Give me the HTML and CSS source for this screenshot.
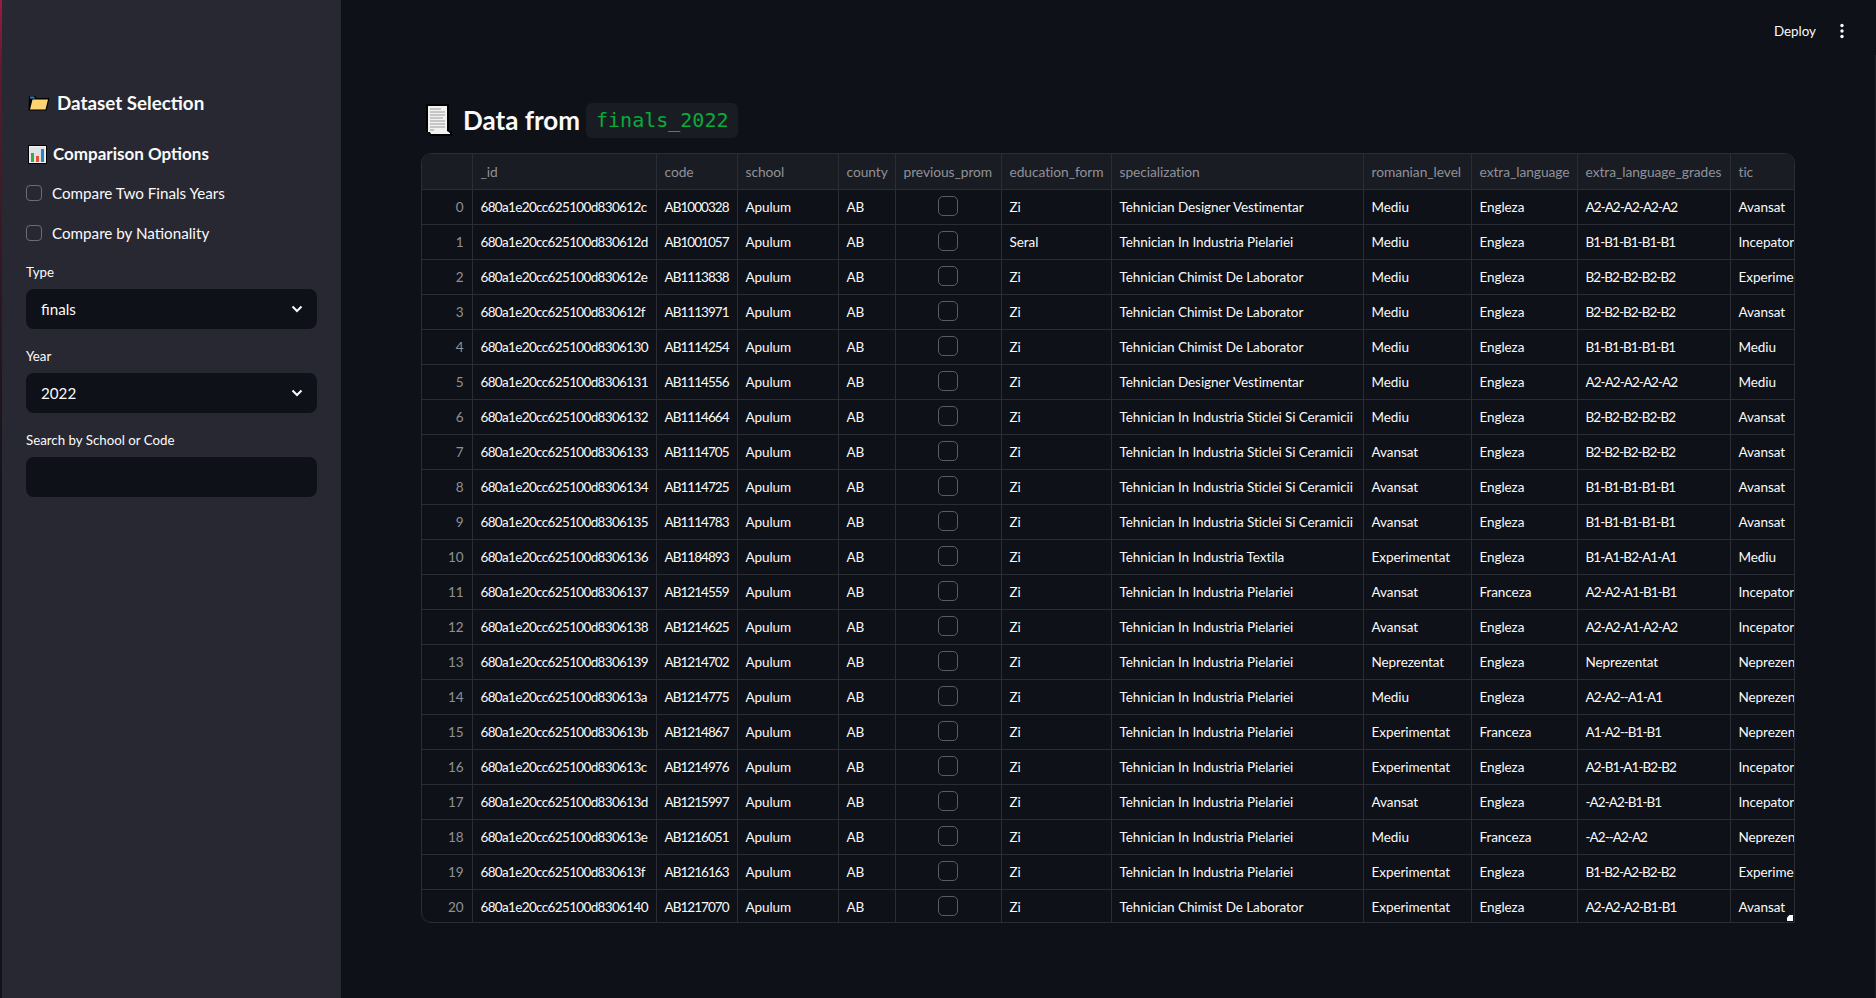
FILE: index.html
```html
<!DOCTYPE html>
<html lang="en">
<head>
    <meta charset="UTF-8">
    <title>Data from finals_2022</title>
    <link rel="stylesheet" href="styles.css">
</head>
<body>

<aside class="sidebar">
    <h2 class="side-title">
        <svg class="emoji-folder" viewBox="0 0 22 16"><path d="M1 1h6l1.500 2H21.500L18.500 15.500H0.500z" fill="#000"/><path d="M2 1.500h4l1 2h-5z" fill="#2a7fc4"/><path d="M4.500 4.500H20L17.500 14.500H2z" fill="#fcd272"/></svg>
        Dataset Selection
    </h2>
    <h3 class="side-subtitle">
        <svg class="emoji-chart" viewBox="0 0 19 19"><rect x="0.500" y="0.500" width="18" height="18" fill="#f2f2f2" stroke="#000"/><rect x="2" y="2" width="15" height="15" fill="#dfe3e6"/><rect x="3" y="8" width="3" height="9" fill="#3aa845"/><rect x="8" y="11" width="3" height="6" fill="#e8502f"/><rect x="13" y="4" width="3" height="13" fill="#2f80c8"/></svg>
        Comparison Options
    </h3>

    <label class="check"><span class="box"></span>Compare Two Finals Years</label>
    <label class="check"><span class="box"></span>Compare by Nationality</label>

    <div class="field">
        <div class="field-label">Type</div>
        <div class="select">finals<svg class="chevron" viewBox="0 0 12 8"><path d="M1.500 1.500 6 6l4.500-4.500" fill="none" stroke="#fafafa" stroke-width="2"/></svg></div>
    </div>
    <div class="field">
        <div class="field-label">Year</div>
        <div class="select">2022<svg class="chevron" viewBox="0 0 12 8"><path d="M1.500 1.500 6 6l4.500-4.500" fill="none" stroke="#fafafa" stroke-width="2"/></svg></div>
    </div>
    <div class="field">
        <div class="field-label">Search by School or Code</div>
        <div class="select"></div>
    </div>
</aside>

<main class="main">
    <div class="topbar">
        <span class="deploy">Deploy</span>
        <svg class="menu-dots" viewBox="0 0 4 16"><circle cx="2" cy="2.500" r="1.700"/><circle cx="2" cy="8" r="1.700"/><circle cx="2" cy="13.500" r="1.700"/></svg>
    </div>

    <h1 class="title">
        <svg class="emoji-doc" viewBox="0 0 27 32"><path d="M1 0h23v27h3v5H5l-1-4H1z" fill="#000"/><path d="M3 2h19v25l3 2v1H6l-1-2H3z" fill="#f1f1f1"/><path d="M5 5h11M5 8h15M5 11h15M5 14h13M5 17h15M5 20h15M5 23h15M5 26h4" stroke="#9a9a9a" stroke-width="1"/></svg>
        <span>Data from</span>
        <code class="chip">finals_2022</code>
    </h1>

    <div class="grid-wrap">
        <table class="grid">
            <colgroup>
                <col class="c-index"><col class="c-id"><col class="c-code"><col class="c-school"><col class="c-county">
                <col class="c-prom"><col class="c-form"><col class="c-spec"><col class="c-level"><col class="c-lang">
                <col class="c-grades"><col class="c-tic">
            </colgroup>
            <thead>
                <tr>
                    <th></th><th>_id</th><th>code</th><th>school</th><th>county</th><th>previous_prom</th><th>education_form</th>
                    <th>specialization</th><th>romanian_level</th><th>extra_language</th><th>extra_language_grades</th><th>tic</th>
                </tr>
            </thead>
            <tbody id="rows"></tbody>
        </table>
        <span class="resize-handle"></span>
    </div>
</main>

<script>
    const pie = 'Tehnician In Industria Pielariei';
    const des = 'Tehnician Designer Vestimentar';
    const chi = 'Tehnician Chimist De Laborator';
    const sti = 'Tehnician In Industria Sticlei Si Ceramicii';

    // code, form, specialization, level, language, grades, tic
    const data = [
        ['AB1000328', 'Zi', des, 'Mediu', 'Engleza', 'A2-A2-A2-A2-A2', 'Avansat'],
        ['AB1001057', 'Seral', pie, 'Mediu', 'Engleza', 'B1-B1-B1-B1-B1', 'Incepator'],
        ['AB1113838', 'Zi', chi, 'Mediu', 'Engleza', 'B2-B2-B2-B2-B2', 'Experimentat'],
        ['AB1113971', 'Zi', chi, 'Mediu', 'Engleza', 'B2-B2-B2-B2-B2', 'Avansat'],
        ['AB1114254', 'Zi', chi, 'Mediu', 'Engleza', 'B1-B1-B1-B1-B1', 'Mediu'],
        ['AB1114556', 'Zi', des, 'Mediu', 'Engleza', 'A2-A2-A2-A2-A2', 'Mediu'],
        ['AB1114664', 'Zi', sti, 'Mediu', 'Engleza', 'B2-B2-B2-B2-B2', 'Avansat'],
        ['AB1114705', 'Zi', sti, 'Avansat', 'Engleza', 'B2-B2-B2-B2-B2', 'Avansat'],
        ['AB1114725', 'Zi', sti, 'Avansat', 'Engleza', 'B1-B1-B1-B1-B1', 'Avansat'],
        ['AB1114783', 'Zi', sti, 'Avansat', 'Engleza', 'B1-B1-B1-B1-B1', 'Avansat'],
        ['AB1184893', 'Zi', 'Tehnician In Industria Textila', 'Experimentat', 'Engleza', 'B1-A1-B2-A1-A1', 'Mediu'],
        ['AB1214559', 'Zi', pie, 'Avansat', 'Franceza', 'A2-A2-A1-B1-B1', 'Incepator'],
        ['AB1214625', 'Zi', pie, 'Avansat', 'Engleza', 'A2-A2-A1-A2-A2', 'Incepator'],
        ['AB1214702', 'Zi', pie, 'Neprezentat', 'Engleza', 'Neprezentat', 'Neprezentat'],
        ['AB1214775', 'Zi', pie, 'Mediu', 'Engleza', 'A2-A2--A1-A1', 'Neprezentat'],
        ['AB1214867', 'Zi', pie, 'Experimentat', 'Franceza', 'A1-A2--B1-B1', 'Neprezentat'],
        ['AB1214976', 'Zi', pie, 'Experimentat', 'Engleza', 'A2-B1-A1-B2-B2', 'Incepator'],
        ['AB1215997', 'Zi', pie, 'Avansat', 'Engleza', '-A2-A2-B1-B1', 'Incepator'],
        ['AB1216051', 'Zi', pie, 'Mediu', 'Franceza', '-A2--A2-A2', 'Neprezentat'],
        ['AB1216163', 'Zi', pie, 'Experimentat', 'Engleza', 'B1-B2-A2-B2-B2', 'Experimentat'],
        ['AB1217070', 'Zi', chi, 'Experimentat', 'Engleza', 'A2-A2-A2-B1-B1', 'Avansat']
    ];

    let html = '';
    data.forEach((row, i) => {
        const id = '680a1e20cc625100d830' + (0x612c + i).toString(16);
        html += '<tr><td class="index">' + i + '</td><td class="tight">' + id + '</td><td class="code">' + row[0] + '</td><td>Apulum</td><td>AB</td>'
            + '<td class="prom"><span class="cell-box"></span></td>'
            + row.slice(1).map(v => (v.includes('-') ? '<td class="code">' : '<td>') + v + '</td>').join('') + '</tr>';
    });
    document.getElementById('rows').innerHTML = html;
</script>

</body>
</html>
```

FILE: styles.css
```css
* {
    box-sizing: border-box;
}

body {
    position: relative;
    font-family: Lato, "Noto Sans", sans-serif;
    background-color: #0e1117;
    color: #fafafa;
    display: flex;
    height: 100vh;
    margin: 0;
    overflow: hidden;
}

/* thin scrollbar track on the right edge */
body::after {
    content: "";
    position: absolute;
    top: 55px;
    right: 0;
    bottom: 0;
    width: 1px;
    background-color: #1e2027;
}

/* sidebar */
.sidebar {
    width: 341px;
    flex-shrink: 0;
    height: 100%;
    background-color: #282832;
    border-left: 2px solid;
    border-image: linear-gradient(to bottom, #a01a42 0, #5c1a30 70px, #2a1820 300px, #121218 500px) 1;
    padding: 91px 24px 0 24px;
}

.side-title {
    display: flex;
    align-items: center;
    gap: 7px;
    margin: 0 0 27px 2px;
    font-size: 18.8px;
    line-height: 24px;
    font-weight: 700;
}

.side-subtitle {
    display: flex;
    align-items: center;
    gap: 6px;
    margin: 0 0 15px 2px;
    font-size: 17px;
    line-height: 24px;
    font-weight: 700;
}

.emoji-folder {
    width: 22px;
    height: 16px;
}

.emoji-chart {
    width: 19px;
    height: 19px;
}

.check {
    display: flex;
    align-items: center;
    gap: 10px;
    height: 24px;
    margin-bottom: 16px;
    font-size: 15.2px;
}

.check:last-of-type {
    margin-bottom: 17px;
}

.box {
    width: 16px;
    height: 16px;
    border: 1px solid #6b6d75;
    border-radius: 4px;
}

.field {
    margin-bottom: 17px;
}

.field-label {
    font-size: 13.3px;
    line-height: 20px;
    margin-bottom: 7px;
}

.select {
    display: flex;
    align-items: center;
    justify-content: space-between;
    height: 40px;
    padding: 0 14px 0 15px;
    background-color: #0e1117;
    border-radius: 8px;
    font-size: 15.2px;
}

.chevron {
    width: 12px;
    height: 8px;
}

/* main area */
.main {
    flex: 1;
    min-width: 0;
    padding: 0 82px 0 80px;
}

.topbar {
    display: flex;
    justify-content: flex-end;
    align-items: center;
    gap: 24px;
    height: 62px;
    margin-right: -50px;
}

.deploy {
    font-size: 13.4px;
}

.menu-dots {
    width: 4px;
    height: 16px;
    fill: #fafafa;
}

.title {
    display: flex;
    align-items: center;
    height: 44px;
    margin: 36px 0 11px 4px;
    font-size: 26px;
    font-weight: 700;
}

.emoji-doc {
    width: 27px;
    height: 32px;
    margin-right: 11px;
}

.chip {
    display: block;
    margin-left: 6px;
    padding: 5px 10px;
    background-color: #1a1c24;
    border-radius: 6px;
    font-family: "DejaVu Sans Mono", monospace;
    font-size: 20px;
    line-height: 25px;
    font-weight: 400;
    color: #09ab3b;
}

/* dataframe */
.grid-wrap {
    position: relative;
    width: 1374px;
    height: 770px;
    border: 1px solid #2b2d35;
    border-radius: 10px 10px 0 10px;
    overflow: hidden;
}

.grid {
    table-layout: fixed;
    border-collapse: collapse;
    width: 1372px;
    font-size: 13.5px;
    letter-spacing: -0.07px;
}

.c-index { width: 50px; }
.c-id { width: 184px; }
.c-code { width: 81px; }
.c-school { width: 101px; }
.c-county { width: 57px; }
.c-prom { width: 106px; }
.c-form { width: 110px; }
.c-spec { width: 252px; }
.c-level { width: 108px; }
.c-lang { width: 106px; }
.c-grades { width: 153px; }
.c-tic { width: 64px; }

.grid th,
.grid td {
    padding: 0 0 0 8px;
    border-right: 1px solid #2b2d35;
    border-bottom: 1px solid #2b2d35;
    white-space: nowrap;
    overflow: hidden;
    text-align: left;
}

.grid th:last-child,
.grid td:last-child {
    border-right: none;
}

.grid th {
    height: 35px;
    background-color: #1a1c24;
    font-size: 13.8px;
    font-weight: 400;
    color: #8f9198;
}

.grid td {
    height: 35px;
}

.grid td.tight {
    letter-spacing: -0.65px;
}

.grid td.code {
    letter-spacing: -0.95px;
}

.grid td.index {
    padding: 0 8px 0 0;
    text-align: right;
    color: #8f9198;
}

.grid td.prom {
    padding: 0;
}

.cell-box {
    display: block;
    width: 20px;
    height: 20px;
    margin: 0 auto 2px auto;
    border: 1px solid #5a5c64;
    border-radius: 5px;
}

.resize-handle {
    position: absolute;
    right: 1px;
    bottom: 1px;
    width: 6px;
    height: 6px;
    background-color: #fafafa;
    clip-path: polygon(100% 0, 100% 100%, 0 100%, 0 40%, 40% 0);
}
```
